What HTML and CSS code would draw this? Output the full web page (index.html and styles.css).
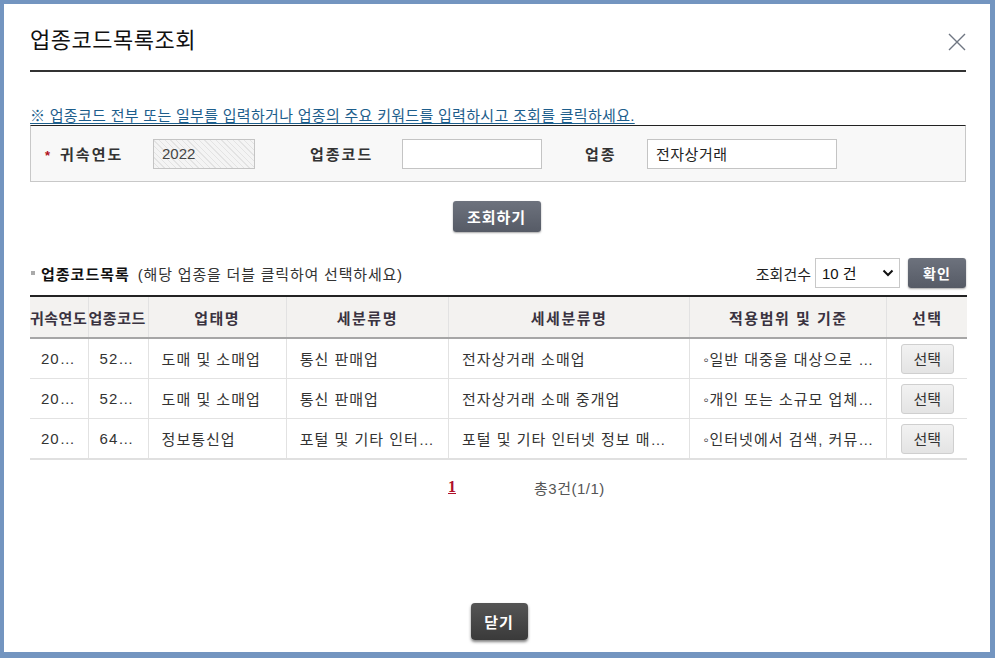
FILE: index.html
```html
<!DOCTYPE html>
<html lang="ko">
  <head>
    <meta charset="UTF-8" />
    <meta name="viewport" content="width=device-width, initial-scale=1.0" />
    <title>업종코드목록조회</title>
    <link rel="stylesheet" href="styles.css">
  </head>
  <body>
    <div class="popup">
      <!-- Title -->
      <div class="pop-header">
        <h1>업종코드목록조회</h1>
        <button class="btn-close" type="button" aria-label="닫기">
          <svg width="20" height="20" viewBox="0 0 20 20">
            <path d="M2 2 L18 18 M18 2 L2 18" stroke="#6f7682" stroke-width="1.4" fill="none" />
          </svg>
        </button>
      </div>

      <p class="notice">※ 업종코드 전부 또는 일부를 입력하거나 업종의 주요 키워드를 입력하시고 조회를 클릭하세요.</p>

      <!-- Search box -->
      <div class="search-box">
        <label class="lbl lbl-year"><span class="req">*</span>귀속연도</label>
        <input class="inp inp-year" type="text" value="2022" readonly />
        <label class="lbl lbl-code">업종코드</label>
        <input class="inp inp-code" type="text" value="" />
        <label class="lbl lbl-name">업종</label>
        <input class="inp inp-name" type="text" value="전자상거래" />
      </div>

      <div class="search-btn-wrap">
        <button class="btn-dark btn-search" type="button">조회하기</button>
      </div>

      <!-- List header -->
      <div class="list-head">
        <div class="list-title">
          <span class="bullet"></span>
          <strong>업종코드목록</strong>
          <span class="hint">(해당 업종을 더블 클릭하여 선택하세요)</span>
        </div>
        <div class="list-ctrl">
          <span class="cnt-label">조회건수</span>
          <div class="select-wrap">
            <select class="cnt-select">
              <option>10 건</option>
              <option>20 건</option>
              <option>50 건</option>
            </select>
            <svg class="chev" width="12" height="8" viewBox="0 0 12 8">
              <path d="M1.5 1.5 L6 6 L10.5 1.5" stroke="#111" stroke-width="2" fill="none" />
            </svg>
          </div>
          <button class="btn-dark btn-ok" type="button">확인</button>
        </div>
      </div>

      <!-- Result table -->
      <table class="code-table">
        <colgroup>
          <col style="width: 58px" />
          <col style="width: 60px" />
          <col style="width: 138px" />
          <col style="width: 162px" />
          <col style="width: 241px" />
          <col style="width: 197px" />
          <col style="width: 80px" />
        </colgroup>
        <thead>
          <tr>
            <th class="tight">귀속연도</th>
            <th class="tight">업종코드</th>
            <th>업태명</th>
            <th>세분류명</th>
            <th>세세분류명</th>
            <th>적용범위 및 기준</th>
            <th>선택</th>
          </tr>
        </thead>
        <tbody>
          <tr>
            <td class="c">2022</td>
            <td class="c">525101</td>
            <td>도매 및 소매업</td>
            <td>통신 판매업</td>
            <td>전자상거래 소매업</td>
            <td>◦일반 대중을 대상으로 온라인 통신망을 통하여</td>
            <td class="c pick"><button class="btn-pick" type="button">선택</button></td>
          </tr>
          <tr>
            <td class="c">2022</td>
            <td class="c">525102</td>
            <td>도매 및 소매업</td>
            <td>통신 판매업</td>
            <td>전자상거래 소매 중개업</td>
            <td>◦개인 또는 소규모 업체가 온라인 상에서</td>
            <td class="c pick"><button class="btn-pick" type="button">선택</button></td>
          </tr>
          <tr>
            <td class="c">2022</td>
            <td class="c">642004</td>
            <td>정보통신업</td>
            <td>포털 및 기타 인터넷 정보 매개 서비스업</td>
            <td>포털 및 기타 인터넷 정보 매개 서비스업</td>
            <td>◦인터넷에서 검색, 커뮤니티 등을 제공하는</td>
            <td class="c pick"><button class="btn-pick" type="button">선택</button></td>
          </tr>
        </tbody>
      </table>

      <div class="paging">
        <a class="page-on" href="#">1</a>
        <span class="total">총3건(1/1)</span>
      </div>

      <div class="pop-footer">
        <button class="btn-dark btn-close-bottom" type="button">닫기</button>
      </div>
    </div>
  </body>
</html>
```

FILE: styles.css
```css
/* Page frame */
html,
body {
  margin: 0;
  padding: 0;
}

body {
  font-family: "Liberation Sans", "Noto Sans CJK KR", sans-serif;
  font-size: 14px;
  color: #333;
  background-color: #7395c0;
}

.popup {
  box-sizing: border-box;
  width: 995px;
  height: 658px;
  border: 4px solid #7395c0;
  border-right-width: 5px;
  border-bottom-width: 6px;
  background-color: #fff;
  padding: 0 24px 0 26px;
  display: flex;
  flex-direction: column;
}

/* Title */
.pop-header {
  box-sizing: border-box;
  height: 68px;
  padding-top: 22px;
  border-bottom: 2px solid #333;
  display: flex;
  justify-content: space-between;
  align-items: flex-start;
}

.pop-header h1 {
  margin: 0;
  font-size: 22px;
  font-weight: normal;
  line-height: 30px;
  color: #111;
  letter-spacing: 0.5px;
}

.btn-close {
  border: 0;
  background: none;
  padding: 0;
  margin: 6px -1px 0 0;
  width: 20px;
  height: 20px;
  cursor: pointer;
}

.btn-close svg {
  display: block;
}

/* Notice */
.notice {
  margin: 35px 0 0 0;
  line-height: 18px;
  font-size: 15px;
  letter-spacing: 0.3px;
  color: #1d5e8c;
  text-decoration: underline;
  text-underline-offset: 2px;
  white-space: nowrap;
}

/* Search box */
.search-box {
  display: flex;
  align-items: center;
  height: 57px;
  box-sizing: border-box;
  border: 1px solid #c8c8c8;
  border-top: 1px solid #222;
  background-color: #f8f8f8;
  padding-left: 12px;
}

.lbl {
  font-size: 15px;
  font-weight: bold;
  color: #333;
  letter-spacing: 2px;
}

.req {
  color: #b01020;
  font-size: 13px;
  margin-right: 8px;
  margin-left: 2px;
}

.lbl-year {
  width: 110px;
}

.lbl-code {
  margin-left: 55px;
  width: 92px;
}

.lbl-name {
  margin-left: 43px;
  width: 62px;
}

.inp {
  box-sizing: border-box;
  height: 30px;
  border: 1px solid #c4c4c4;
  background-color: #fff;
  padding: 0 8px;
  font-family: "Liberation Sans", "Noto Sans CJK KR", sans-serif;
  font-size: 15px;
  color: #222;
  outline: none;
}

.inp-year {
  width: 102px;
  color: #444;
  background: repeating-linear-gradient(45deg, #f4f4f4 0 3px, #e3e3e3 3px 4px);
}

.inp-code {
  width: 140px;
}

.inp-name {
  width: 190px;
  letter-spacing: 0.5px;
}

/* Buttons */
.btn-dark {
  border: 0;
  border-radius: 3px;
  color: #fff;
  font-family: "Liberation Sans", "Noto Sans CJK KR", sans-serif;
  font-weight: bold;
  font-size: 15px;
  background: linear-gradient(#6d727d, #565b66);
  box-shadow: 0 1px 2px rgba(0, 0, 0, 0.35);
  cursor: pointer;
  letter-spacing: 1px;
}

.search-btn-wrap {
  display: flex;
  justify-content: center;
  margin-top: 19px;
}

.btn-search {
  width: 88px;
  height: 31px;
  margin-left: -3px;
}

/* List header */
.list-head {
  display: flex;
  justify-content: space-between;
  align-items: center;
  margin-top: 26px;
  height: 30px;
}

.list-title {
  display: flex;
  align-items: center;
  padding-left: 1px;
}

.bullet {
  width: 4px;
  height: 4px;
  background-color: #aaa;
  margin-right: 6px;
}

.list-title strong {
  font-size: 15px;
  color: #111;
  letter-spacing: 1px;
}

.hint {
  margin-left: 8px;
  font-size: 15px;
  color: #333;
  letter-spacing: 0.8px;
}

.list-ctrl {
  display: flex;
  align-items: center;
}

.cnt-label {
  font-size: 15px;
  color: #222;
  margin-right: 4px;
}

.select-wrap {
  position: relative;
}

.cnt-select {
  appearance: none;
  -webkit-appearance: none;
  box-sizing: border-box;
  width: 85px;
  height: 30px;
  border: 1px solid #c8c8c8;
  background-color: #fff;
  padding: 0 0 0 6px;
  font-family: "Liberation Sans", "Noto Sans CJK KR", sans-serif;
  font-size: 15px;
  color: #111;
  border-radius: 0;
  outline: none;
}

.chev {
  position: absolute;
  right: 6px;
  top: 11px;
  pointer-events: none;
}

.btn-ok {
  width: 58px;
  height: 30px;
  margin-left: 8px;
  font-size: 14px;
  padding: 0;
}

/* Table */
.code-table {
  width: 937px;
  table-layout: fixed;
  border-collapse: collapse;
  margin-top: 7px;
  border-top: 2px solid #222;
  border-bottom: 2px solid #e0e0e0;
}

.code-table th,
.code-table td {
  white-space: nowrap;
  overflow: hidden;
  text-overflow: ellipsis;
  border-left: 1px solid #e2e2e2;
}

.code-table th:first-child,
.code-table td:first-child {
  border-left: 0;
}

.code-table th {
  height: 40px;
  background-color: #f3f2f0;
  font-size: 15px;
  font-weight: bold;
  color: #3a3340;
  letter-spacing: 1.5px;
  border-bottom: 2px solid #a6a6a6;
  text-overflow: clip;
  padding: 0 4px;
}

.code-table th.tight {
  padding: 0;
  text-align: left;
  letter-spacing: 0.5px;
}

.code-table td {
  height: 39px;
  padding: 0 13px;
  font-size: 15px;
  color: #333;
  border-bottom: 1px solid #e2e2e2;
  letter-spacing: 1px;
}

.code-table td.c {
  text-align: center;
  padding: 0 11px;
}

.code-table td.pick {
  padding: 0;
}

.btn-pick {
  width: 53px;
  height: 30px;
  border: 1px solid #cfcfcf;
  border-radius: 3px;
  background: linear-gradient(#f2f2f2, #e4e4e4);
  font-family: "Liberation Sans", "Noto Sans CJK KR", sans-serif;
  font-size: 15px;
  color: #333;
  padding: 0;
  cursor: pointer;
}

/* Paging */
.paging {
  display: flex;
  align-items: center;
  padding-left: 418px;
  margin-top: 17px;
  height: 20px;
}

.page-on {
  font-family: "Liberation Serif", serif;
  font-weight: bold;
  font-size: 16px;
  color: #b0102a;
  text-decoration: underline;
}

.total {
  margin-left: 78px;
  font-size: 15px;
  letter-spacing: 0.5px;
  color: #555;
}

/* Footer */
.pop-footer {
  margin-top: auto;
  padding-bottom: 12px;
  display: flex;
  justify-content: center;
}

.btn-close-bottom {
  width: 57px;
  height: 37px;
  border-radius: 4px;
  background: linear-gradient(#555, #3a3a3a);
  box-shadow: 0 2px 3px rgba(0, 0, 0, 0.5);
  font-size: 15px;
  margin-left: 2px;
}
```
